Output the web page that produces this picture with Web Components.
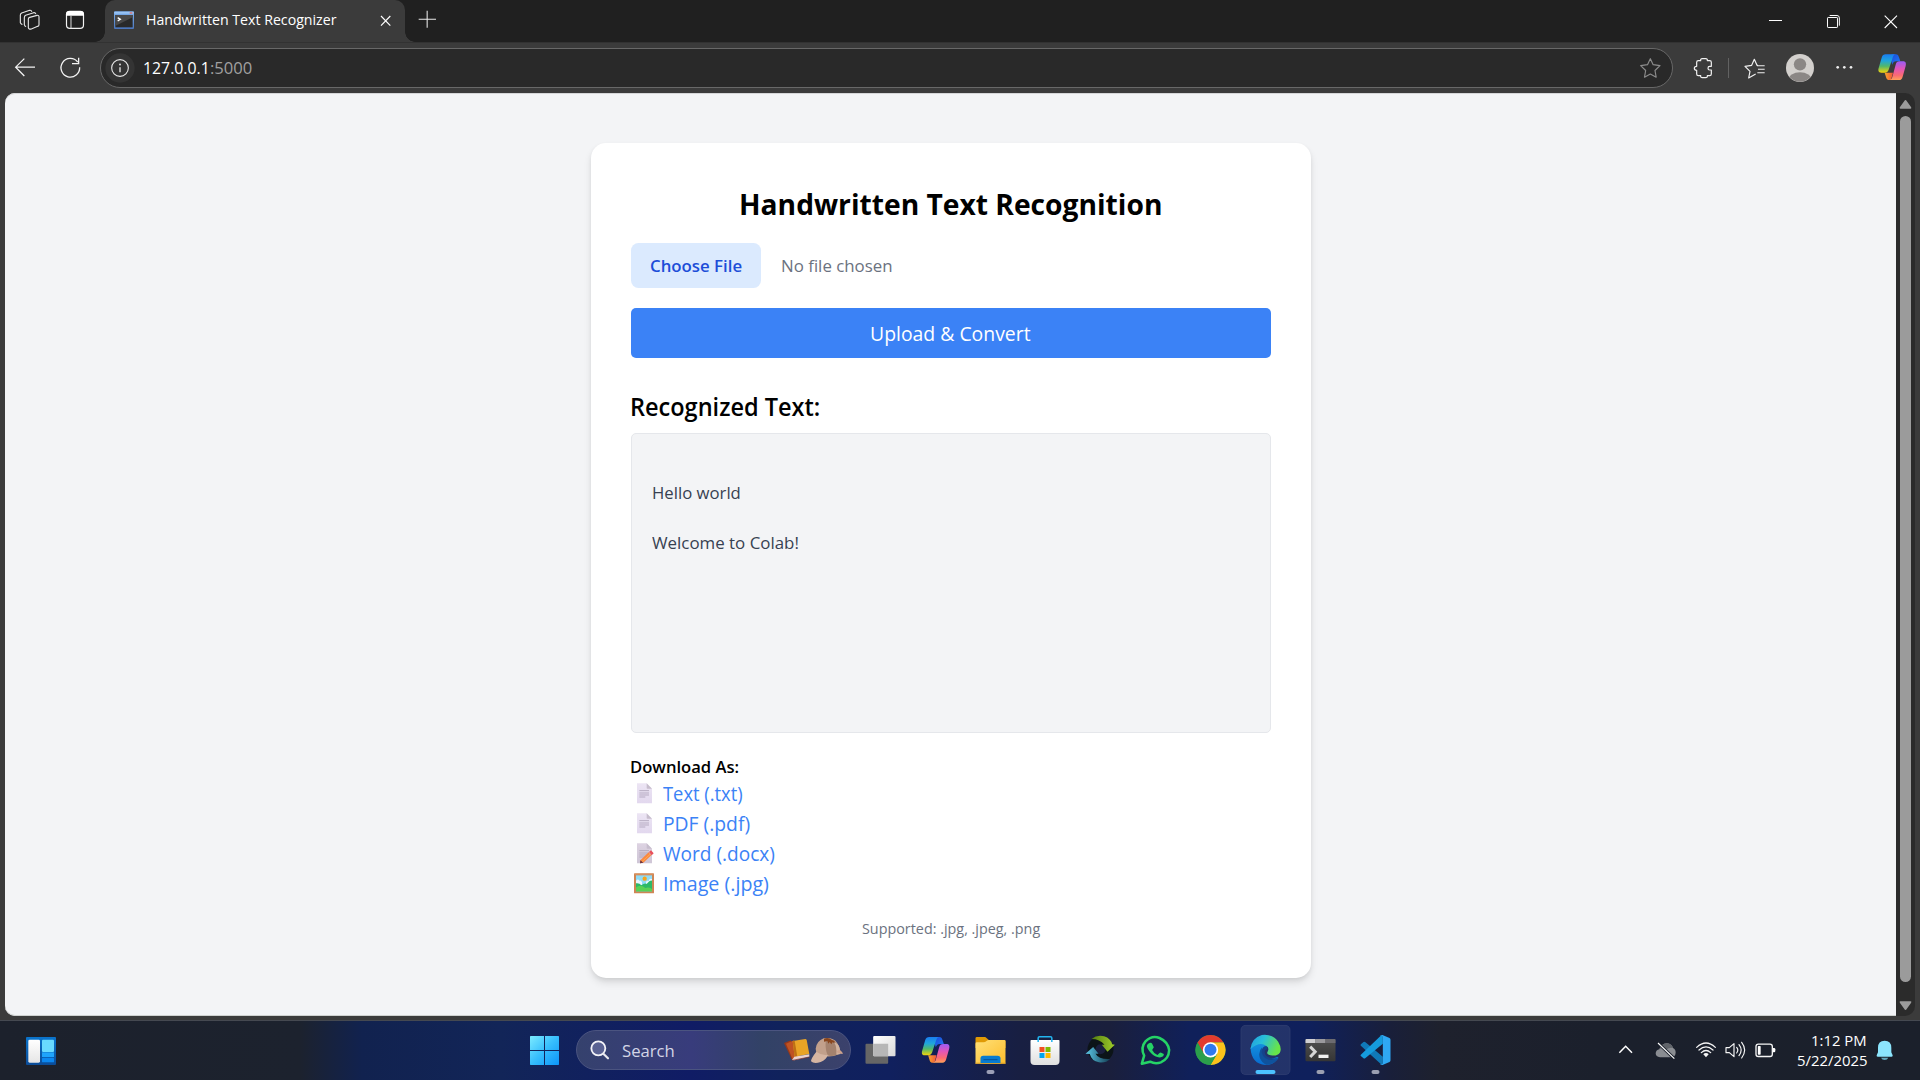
<!DOCTYPE html>
<html lang="en">
<head>
<meta charset="utf-8">
<title>Handwritten Text Recognizer</title>
<style>
html,body{margin:0;height:100%;overflow:hidden;background:#3b3b3b}
body{font-family:"Open Sans","Noto Sans",sans-serif}
</style>
</head>
<body>
<desktop-screen></desktop-screen>
<script>
/* Icon table: [viewBox x, y, width, height, markup]; three units make one pixel. */
const COPILOT = `
<linearGradient id="ca" x1="0" y1="0" x2="0" y2="1"><stop offset="0" stop-color="#1a7df0"/><stop offset=".35" stop-color="#1fa5dc"/><stop offset=".65" stop-color="#52b86a"/><stop offset="1" stop-color="#f5d40a"/></linearGradient>
<linearGradient id="cb" x1="0" y1="0" x2="0" y2="1"><stop offset="0" stop-color="#9a5cf5"/><stop offset=".4" stop-color="#e155b8"/><stop offset=".75" stop-color="#fb6a72"/><stop offset="1" stop-color="#ffa25a"/></linearGradient>
<linearGradient id="cc" x1="0" y1="0" x2="1" y2="1"><stop offset="0" stop-color="#1b49d8"/><stop offset="1" stop-color="#1f7bf5"/></linearGradient>
<linearGradient id="cd" x1="0" y1="0" x2="1" y2="0"><stop offset="0" stop-color="#f9a62b"/><stop offset="1" stop-color="#f0553c"/></linearGradient>
<path d="M40 0h12c7 0 9 5 11 12l3 9H54c-8 0-10 4-12 10L36 12Z" fill="url(#cc)"/>
<path d="M19 55h25L38 77h-5c-8 0-9-5-11-12Z" fill="url(#cd)"/>
<path d="M22 0h32c-8 0-10 6-12 13L31 46c-2 6-6 9-12 9H9C0 55-1 48 1 41L10 10C12 3 16 0 22 0Z" fill="url(#ca)"/>
<path d="M62 77H32c8 0 9-6 11-13l9-33c2-7 5-10 12-10h10c9 0 10 7 8 14L73 67c-2 7-5 10-11 10Z" fill="url(#cb)"/>`;
const DOC = `<linearGradient id="dg" x1="0" y1="0" x2="0" y2="1"><stop offset="0" stop-color="#ece5f4"/><stop offset="1" stop-color="#e2d8ee"/></linearGradient>
<path d="M81 192h29l16 16v44H81Z" fill="url(#dg)"/><path d="M110 192l16 16h-14q-2 0-2-2Z" fill="#c7bdcd"/>
<path d="M88 214h29M88 221h29M88 227h29M88 233h18" stroke="#a99eb5" stroke-width="2.4"/>`;
const ICONS = {
  workspaces:[55,25,70,70,`<g fill="none" stroke="#e6e6e6" stroke-width="3.4" stroke-linejoin="round" stroke-linecap="round"><path d="M86 58q0-4 4-5l22-6q6-1 6 5v23q0 4-4 5l-19 8q-8 2-9-4Z"/><path d="M78 80q-3 0-4-5V54q0-5 4-7l24-8q5-1 6 3"/><path d="M67 74q-4-1-5-5V47q0-5 4-7l24-8q5-1 6 3"/></g>`],
  tabs:[192,25,68,70,`<rect x="199.500" y="35" width="51" height="51" rx="10" fill="none" stroke="#f2f2f2" stroke-width="3.6"/><path d="M198 48V44q0-10 10-10h34q10 0 10 10v4Z" fill="#fff"/><path d="M213 48v38" stroke="#ddd" stroke-width="3"/>`],
  favicon:[339,30,66,60,`<linearGradient id="fb" x1="0" y1="0" x2="0" y2="1"><stop offset="0" stop-color="#7fb2ee"/><stop offset="1" stop-color="#4b75bb"/></linearGradient><rect x="342" y="34" width="60" height="53" rx="3" fill="url(#fb)"/><path d="M343 36h58v5h-58z" fill="#98c3f4"/><path d="M389 37h8v4h-8z" fill="#df6d68"/><path d="M346 45h52v37h-52z" fill="#292929"/><path d="M346 45h52v7l-52 26z" fill="#484848"/><path d="M353 53l8 5-8 5" fill="none" stroke="#fff" stroke-width="4"/>`],
  closeTab:[1137,41,40,40,`<path d="M1143 47l28 29M1171 47l-28 29" stroke="#fff" stroke-width="3.5"/>`],
  plus:[1250,28,62,60,`<path d="M1280.500 33v51M1255 59h52" stroke="#e8e8e8" stroke-width="3.2"/>`],
  back:[42,172,66,62,`<path d="M105 202.500H47M73 177L47 202.500 73 229" fill="none" stroke="#f4f4f4" stroke-width="3.8"/>`],
  reload:[176,169,68,68,`<path d="M232 187A28 28 0 1 0 238 203M235 174v18h-20" fill="none" stroke="#f4f4f4" stroke-width="3.8"/>`],
  info:[315,159,90,90,`<circle cx="360" cy="204" r="44" fill="#343434"/><circle cx="360" cy="204" r="25" fill="none" stroke="#e8e8e8" stroke-width="3.3"/><path d="M360 202v15" stroke="#e8e8e8" stroke-width="4"/><circle cx="360" cy="193.500" r="2.700" fill="#eee"/>`],
  star:[176,170,68,68,`<path d="M210 178l8.500 18 20.500 3-15 14.500 3.500 20L210 224l-17.500 9.500 3.500-20L181 199l20.500-3Z" fill="none" stroke="#8c8c8c" stroke-width="3.5" stroke-linejoin="round"/>`],
  puzzle:[340,168,66,70,`<path d="M359 182h7q-1-6 5-6h10q6 0 5 6h7q5 0 5 5v12h-5q-5 0-5 5.500t5 5.500h5v12q0 5-5 5h-7q1 6-5 6h-10q-6 0-5-6h-7q-5 0-5-5v-11q-7 0-7-6t7-6v-12q0-5 5-5Z" fill="none" stroke="#f0f0f0" stroke-width="3.6" stroke-linejoin="round"/>`],
  favs:[490,168,70,70,`<path d="M535 196h-3L524 178l-8 18-20 3 15 15-4 20 17-10 4-2" fill="none" stroke="#f0f0f0" stroke-width="3.5" stroke-linejoin="round"/><path d="M532 197.500h23M535 208h20M533 218.500h22" stroke="#f0f0f0" stroke-width="3.2"/>`],
  avatar:[615,159,90,90,`<clipPath id="av"><circle cx="660" cy="204" r="41"/></clipPath><circle cx="660" cy="204" r="42" fill="#d3d0cd"/><g clip-path="url(#av)" fill="#8b8785"><circle cx="660" cy="193" r="18.500"/><ellipse cx="660" cy="240" rx="35" ry="23"/></g>`],
  dots:[766,190,58,26,`<g fill="#eee"><circle cx="774" cy="203" r="4"/><circle cx="794" cy="203" r="4"/><circle cx="814" cy="203" r="4"/></g>`],
  copilot:[-1,-1,86,80,COPILOT],
  min:[564,45,46,36,`<path d="M567 61.500h39" stroke="#fff" stroke-width="3"/>`],
  max:[738,42,46,46,`<path d="M749 46.500h22q7 0 7 7V77" fill="none" stroke="#fff" stroke-width="3"/><rect x="742.500" y="52.500" width="30" height="30" rx="2" fill="none" stroke="#fff" stroke-width="3"/>`],
  close:[910,41,48,48,`<path d="M915 46l37 37M952 46l-37 37" stroke="#fff" stroke-width="3.2"/>`],
  up:[957,297,40,32,`<path d="M976.500 300q2 0 3 2l14 20q2 4-2 4h-30q-4 0-2-4l14-20q1-2 3-2Z" fill="#9b9b9b"/>`],
  down:[957,2,40,32,`<path d="M976.500 32q2 0 3-2l14-20q2-4-2-4h-30q-4 0-2 4l14 20q1 2 3 2Z" fill="#9b9b9b"/>`],
  doc:[72,188,60,68,DOC],
  memo:[72,188,60,68,DOC.replaceAll('dg','dm').replace('#ece5f4','#ddd3e2').replace('#e2d8ee','#cfc6d6')+`<path d="M91 243l25-24 8 9-24 22-10 2Z" fill="#fb8740"/><path d="M96 247l24-22" stroke="#ffac50" stroke-width="3"/><path d="M117 218l6-5 8 9-6 6Z" fill="#e8505b"/><path d="M91 243l9 7-10 2Z" fill="#6b3540"/>`],
  picture:[72,458,60,68,`<rect x="72" y="462" width="60" height="60" rx="2" fill="#cf8654"/><path d="M74 464h56" stroke="#e4a172" stroke-width="2"/><path d="M78 468h48v48H78z" fill="#8fdcf6"/><circle cx="104" cy="478" r="6.500" fill="#f5a41c"/><path d="M78 484q6-7 10 0 6-2 8 5v9H78ZM108 488q4-6 8-3 2-9 10-6v14h-18Z" fill="#eaf6ff"/><path d="M78 492q10-2 16 6 10-8 16-4 10-12 16-10v32H78Z" fill="#2cb968"/><path d="M78 504q14-10 28 2 10-4 20 3v7H78Z" fill="#59d154"/>`],
  widgets:[75,135,96,90,`<linearGradient id="wg" x1="0" y1="0" x2="0" y2="1"><stop offset="0" stop-color="#0a74cc"/><stop offset="1" stop-color="#0b4c98"/></linearGradient><rect x="78" y="138" width="90" height="84" rx="3" fill="url(#wg)"/><linearGradient id="wh" x1="0" y1="0" x2="0" y2="1"><stop offset="0" stop-color="#fff"/><stop offset="1" stop-color="#e6e6e6"/></linearGradient><rect x="85" y="146" width="35" height="69" rx="4" fill="url(#wh)"/><rect x="126" y="146" width="36" height="37" rx="3" fill="#69dafe"/><rect x="126" y="184" width="36" height="14" fill="#1fa4fb"/><rect x="126" y="200" width="36" height="14" rx="2" fill="#0b87ef"/>`],
  start:[84,30,99,180,`<linearGradient id="sg" gradientUnits="userSpaceOnUse" x1="90" y1="78" x2="177" y2="165"><stop offset="0" stop-color="#7cebff"/><stop offset=".5" stop-color="#36bdfd"/><stop offset="1" stop-color="#0c94f8"/></linearGradient><path fill="url(#sg)" d="M90 80q0-2 2-2h40v42H90zM135 78h40q2 0 2 2v40h-42zM90 123h42v42H92q-2 0-2-2zM135 123h42v40q0 2-2 2h-40z"/>`],
  search:[268,88,64,64,`<circle cx="296" cy="116" r="21" fill="#7e83b5" fill-opacity=".5" stroke="#f3f3f8" stroke-width="5.500"/><path d="M311 132l14 14" stroke="#e8e8ef" stroke-width="6.500" stroke-linecap="round"/>`],
  sherlock:[852,78,183,84,`<path d="M855 99l21-8 10 46-7 13Z" fill="#97381a"/><path d="M861 101l24-10 16 49-20 8Z" fill="#be5223"/><path d="M881 93l38-6q3 0 4 3l8 42-44 8Z" fill="#e9a426"/><path d="M881 93l6 0 8 47-8 1Z" fill="#bd7015"/><path d="M879 150l7-10 45-7v7l-45 11Z" fill="#ead3cf"/><path d="M880 151l51-10" stroke="#803028" stroke-width="2"/>
<path d="M950 116q3-23 24-31 28-4 40 13 9 12 7 33-34 18-69-3Z" fill="#c2a08b"/><path d="M981 90q-4 23 4 44 12 9 36-2V124q-4-31-27-36Z" fill="#a4826e"/><path d="M1005 97q9 13 7 37l13-2-3-19q-4-12-17-16Z" fill="#d0b29e"/><path d="M1012 127q7-13 15-3 8 8 2 8Z" fill="#cda28c"/><path d="M952 125q-16 20-16 29 9 9 29 2 17-7 22-22-17 4-35-9Z" fill="#d5b5a2"/><path d="M975 86q14-5 24 4l8 3-1 7-5-4-4 7-5-7-4 5-3-8-10 2Z" fill="#89461e"/>`],
  taskview:[40.5,30,165,180,`<linearGradient id="tv" x1="0" y1="0" x2="1" y2="1"><stop offset="0" stop-color="#fff"/><stop offset="1" stop-color="#d9d9d9"/></linearGradient><rect x="78" y="101" width="68" height="60" rx="3" fill="#666"/><rect x="101" y="78" width="67" height="61" rx="3" fill="url(#tv)"/><path d="M101 101h45v38h-42q-3 0-3-3Z" fill="#b7b7b7"/>`],
  copilotBar:[205.5,30,165,180,`<g transform="translate(247 81)">${COPILOT}</g>`],
  explorer:[370.5,30,165,180,`<linearGradient id="eg" x1="0" y1="0" x2="1" y2="1"><stop offset="0" stop-color="#ffe078"/><stop offset="1" stop-color="#fdbd2b"/></linearGradient><path d="M408 85q0-4 4-4h24q3 0 5 3l7 6h46q4 0 4 4v20h-90Z" fill="#e09a05"/><path d="M408 101q0-4 4-4h20q5 0 9-4 3-3 7-3h46q4 0 4 4v67h-90Z" fill="url(#eg)"/><path d="M408 158h90v3h-90z" fill="#dca027"/><path d="M423 159v-14q0-8 8-8h43q9 0 9 8v14Z" fill="#087bd0"/><path d="M432 149h42" stroke="#04529b" stroke-width="3"/><rect x="441" y="180" width="24" height="12" rx="6" fill="#9b9fb7"/>`],
  store:[535.5,30,165,180,`<linearGradient id="st" x1="0" y1="0" x2="0" y2="1"><stop offset="0" stop-color="#fff"/><stop offset="1" stop-color="#dfdfdf"/></linearGradient><path d="M573 92q0-2 2-2h83q2 0 2 2v61q0 12-12 12h-63q-12 0-12-12Z" fill="url(#st)"/><path d="M596 96V84q0-4 4-4h33q4 0 4 4v12" fill="none" stroke="#22b5f0" stroke-width="4.500"/><path d="M600 111h15v15h-15z" fill="#f25022"/><path d="M618 111h15v15h-15z" fill="#7fba00"/><path d="M600 129h15v15h-15z" fill="#00a4ef"/><path d="M618 129h15v15h-15z" fill="#ffb900"/>`],
  sync:[700.5,30,165,180,`<linearGradient id="sy" x1="0" y1="0" x2="1" y2="0"><stop offset="0" stop-color="#537d12"/><stop offset="1" stop-color="#a0cd2a"/></linearGradient><linearGradient id="sz" x1="0" y1="0" x2="1" y2="0"><stop offset="0" stop-color="#5cc9e9"/><stop offset="1" stop-color="#123b50"/></linearGradient><circle cx="783" cy="118" r="27" fill="none" stroke="#0c1418" stroke-width="24"/><path d="M756 87q16-13 38-8 20 7 24 24l8 1-22 21-17-21h8q-14-17-39-17Z" fill="url(#sy)"/><path d="M812 147q-13 13-34 10-22-4-27-25l-13-1 23-20 16 20h-9q10 18 44 16Z" fill="url(#sz)"/>`],
  whatsapp:[25.5,30,165,180,`<path d="M67 161l7-24q-12-24 4-43 19-19 42-10 25 11 29 36-1 27-25 37-17 6-32-2Z" fill="none" stroke="#25d366" stroke-width="7.500" stroke-linejoin="round"/><path d="M90 99q5-3 8 2l5 11-5 8q6 12 16 15l6-6q2-2 5-1l8 4q0 8-9 10-16 2-29-12-14-16-13-23 2-6 8-8Z" fill="#25d366"/>`],
  chrome:[190.5,30,165,180,`<circle cx="273" cy="120" r="45" fill="#2b9f4b"/><path d="M234 97.500A45 45 0 0 1 312 97.500H273L253 131Z" fill="#e33b2e"/><path d="M273 97.500h39A45 45 0 0 1 273 165l20-34Z" fill="#fcc21b"/><path d="M234 97.500L253 131a23 23 0 0 0 40 0L273 165A45 45 0 0 1 234 97.500Z" fill="#2b9f4b"/><circle cx="273" cy="119.500" r="23" fill="#fff"/><circle cx="273" cy="119.500" r="18" fill="#3079ee"/>`],
  edge:[355.5,30,165,180,`<rect x="364" y="46" width="148" height="148" rx="14" fill="#fff" fill-opacity=".085" stroke="#fff" stroke-opacity=".1" stroke-width="2"/><linearGradient id="e1" x1="0" y1="0" x2="1" y2=".35"><stop offset="0" stop-color="#219bdf"/><stop offset=".45" stop-color="#28bfda"/><stop offset="1" stop-color="#68e449"/></linearGradient><linearGradient id="e2" x1="0" y1="0" x2="0" y2="1"><stop offset="0" stop-color="#1594df"/><stop offset="1" stop-color="#086bce"/></linearGradient><path d="M393 114q14-25 41-18 14 7 3 18-14 15 0 26 18 10 36 1l4 2q-14 22-39 22-42-3-45-51Z" fill="url(#e2)"/><path d="M393 117q3-33 34-42 32-4 49 20 12 20 5 33-9 13-33 6-8-3-3-10 5-11-5-17-20-13-47 10Z" fill="url(#e1)"/><path d="M428 112q-13 13-7 32 6 14 19 20 23 1 37-20-14 8-30 3-24-9-19-35Z" fill="#0f529c"/><path d="M437 108q-13 7-10 21 4 15 20 20 16 4 29-5-12 3-25-1-20-7-14-22 7-3 7-7-1-5-7-6Z" fill="#15438c"/><rect x="408" y="180" width="60" height="12" rx="6" fill="#4cc2ff"/>`],
  terminal:[520.5,30,165,180,`<linearGradient id="tm" x1="0" y1="0" x2="0" y2="1"><stop offset="0" stop-color="#505050"/><stop offset="1" stop-color="#353535"/></linearGradient><path d="M558 90q0-3 3-3h84q3 0 3 3v60q0 4-4 4h-82q-4 0-4-4Z" fill="url(#tm)"/><path d="M558 90q0-3 3-3h27v12h-30z" fill="#d0cfd2"/><path d="M588 87h30v12h-30z" fill="#9a999d"/><path d="M618 87h27q3 0 3 3v9h-30z" fill="#6c6b70"/><path d="M572 110l15 15-15 16" fill="none" stroke="#d6d6d6" stroke-width="9"/><path d="M597 139h30" stroke="#f1f1f1" stroke-width="10"/><rect x="591" y="180" width="24" height="12" rx="6" fill="#9b9fb1"/>`],
  vscode:[685.5,30,165,180,`<path d="M724 103l8-7q3-2 6 1l52 43v23q-4 1-7-2l-59-54q-2-2 0-4Z" fill="#1079b8"/><path d="M724 138l8 7q3 2 6-1l52-43V76q-4-1-7 2l-59 56q-2 2 0 4Z" fill="#159bdd"/><path d="M789 75l21 9q3 2 3 5v62q0 3-3 5l-21 9q-6 1-7-4 8 5 8-3V82q0-8-8-4 1-4 7-3Z" fill="#2fa8f3"/><rect x="756" y="180" width="24" height="12" rx="6" fill="#9b9fb1"/>`],
  chevron:[112,130,52,40,`<path d="M119 159l19-19 19 19" fill="none" stroke="#fff" stroke-width="4.500"/>`],
  cloud:[223,122,70,58,`<path d="M241 171q-13-2-13-12 1-11 11-12 6-17 22-18 14 0 19 14 8 3 8 14-1 13-13 14Z" fill="#8a8d92"/><path d="M239 146q8-17 23-17 14 1 18 14-15-3-21 7-9-10-20-4Z" fill="#60646a"/><path d="M235 128l49 47" stroke="#1b202c" stroke-width="9"/><path d="M235 128l49 47" stroke="#fff" stroke-width="3.500"/>`],
  wifi:[345,122,66,54,`<g fill="none" stroke="#f5f5f5" stroke-width="3.700" stroke-linecap="round"><path d="M350 141q28-26 56 0M357 149q21-19 42 0M364 157q14-13 28 0"/></g><path d="M378 158q5 0 8 4l-8 9-8-9q3-4 8-4Z" fill="#f5f5f5"/>`],
  volume:[434,120,68,62,`<g fill="none" stroke="#f5f5f5" stroke-width="3.500" stroke-linejoin="round" stroke-linecap="round"><path d="M440 143h10l14-12v39l-14-12h-10Z"/><path d="M472 142q7 8 0 17M479 134q13 16 0 33M487 127q18 23 0 47"/></g>`],
  battery:[524,126,68,50,`<rect x="530" y="132.500" width="49" height="37" rx="7" fill="none" stroke="#f5f5f5" stroke-width="4"/><path d="M581 144h3q4 0 4 4v5q0 4-4 4h-3Z" fill="#fff"/><rect x="535.500" y="138" width="8.500" height="26" rx="2" fill="#fff"/>`],
  bell:[886,118,56,66,`<path d="M915 123q20 0 20 21v14l4 9q1 4-3 4h-42q-4 0-3-4l4-9v-14q0-21 20-21Z" fill="#8ce5fd"/><path d="M904 174h22q-3 7-11 7t-11-7Z" fill="#63a6bb"/>`]
};

class UiIcon extends HTMLElement{
  connectedCallback(){
    const [x,y,w,h,m]=ICONS[this.getAttribute('name')];
    this.attachShadow({mode:'open'}).innerHTML=
    `<style>:host{display:block;flex:none}svg{display:block}</style><svg width="${w/3}" height="${h/3}" viewBox="${x} ${y} ${w} ${h}">${m}</svg>`;
  }
}
customElements.define('ui-icon',UiIcon);

/* One line of text condensed or expanded to a set advance width. */
class FitText extends HTMLElement{
  connectedCallback(){
    const w=+this.getAttribute('w');
    this.attachShadow({mode:'open'}).innerHTML=
    `<style>:host{display:block;flex:none;width:${w}px;white-space:nowrap}span{display:inline-block;transform-origin:0 50%}</style><span><slot></slot></span>`;
    const s=this.shadowRoot.querySelector('span');
    s.style.transform=`scaleX(${w/s.offsetWidth})`;
  }
}
customElements.define('fit-text',FitText);

const define=(tag,html)=>customElements.define(tag,class extends HTMLElement{
  connectedCallback(){
    const t=document.createElement('template');t.innerHTML=html;
    this.attachShadow({mode:'open'}).append(t.content.cloneNode(true));
  }
});

define('tab-strip',`<style>
:host{display:flex;height:42px;background:#202020;color:#fff}
.left{width:105px;display:flex;box-sizing:border-box;padding:8.333px 0 0 18.333px;gap:22.333px}
.tab{position:relative;width:300px;box-sizing:border-box;background:#3b3b3b;border-radius:10px 10px 0 0;display:flex;padding:10px 0 0 8px}
.tab:before,.tab:after{content:"";position:absolute;bottom:0;width:10px;height:10px}
.tab:before{left:-10px;background:radial-gradient(circle at 0 0,transparent 9.5px,#3b3b3b 10px)}
.tab:after{right:-10px;background:radial-gradient(circle at 100% 0,transparent 9.5px,#3b3b3b 10px)}
.t{font-size:14.6px;line-height:20px;margin:-1px 1px 0 10.5px}
.x{margin:3.667px 0 0 42px}
.plus{margin:9.333px 0 0 11.667px}
.win{margin-left:auto;display:flex;align-items:flex-start;padding:14px 20.667px 0 0}
</style><div class="left"><ui-icon name="workspaces"></ui-icon><ui-icon name="tabs"></ui-icon></div>
<div class="tab"><ui-icon name="favicon"></ui-icon><fit-text class="t" w="190">Handwritten Text Recognizer</fit-text><ui-icon class="x" name="closeTab"></ui-icon></div>
<ui-icon class="plus" name="plus"></ui-icon>
<div class="win"><ui-icon name="min" style="margin:1px 42.667px 0 0"></ui-icon><ui-icon name="max" style="margin-right:42px"></ui-icon><ui-icon name="close" style="margin-top:-.333px"></ui-icon></div>`);

define('address-bar',`<style>
:host{display:flex;align-items:center;height:51px;box-sizing:border-box;padding:0 6px 0 14px;background:#3b3b3b;box-shadow:inset 0 1px #323232}
.pill{display:flex;align-items:center;box-sizing:border-box;width:1573px;height:40px;margin-left:18.667px;border:1px solid #686868;border-radius:20px;background:#292929;padding:0 10px 0 4px;color:#fff;font-size:17px;line-height:24px}
.port{color:#a0a0a0}.pill ui-icon:last-child{margin-left:auto}
.sep{width:1px;height:20px;background:#626262}
</style><ui-icon name="back"></ui-icon><ui-icon name="reload" style="margin-left:22.667px"></ui-icon>
<div class="pill"><ui-icon name="info"></ui-icon><fit-text w="67" style="margin-left:8px">127.0.0.1</fit-text><fit-text class="port" w="42">:5000</fit-text><ui-icon name="star"></ui-icon></div>
<ui-icon name="puzzle" style="margin-left:19.333px"></ui-icon><i class="sep" style="margin-left:14px"></i>
<ui-icon name="favs" style="margin-left:13.667px"></ui-icon><ui-icon name="avatar" style="margin-left:18.333px"></ui-icon>
<ui-icon name="dots" style="margin-left:20.333px"></ui-icon><ui-icon name="copilot" style="margin-left:24px"></ui-icon>`);

define('page-scrollbar',`<style>
:host{display:flex;flex-direction:column;align-items:center;width:19px;box-sizing:border-box;background:#2b2b2b;border-radius:0 10px 10px 0;padding:6px 0 5.300px}
.thumb{flex:1;width:11px;border-radius:6px;background:#9b9b9b;margin:6px 0 17.700px}
</style><ui-icon name="up"></ui-icon><div class="thumb"></div><ui-icon name="down"></ui-icon>`);

/* Download row: an icon name in the "icon" attribute, the label in the slot. */
customElements.define('download-link',class extends HTMLElement{
  connectedCallback(){
    this.attachShadow({mode:'open'}).innerHTML=`<style>:host{display:flex;align-items:center;gap:9.500px;height:30px;padding-left:3px;color:#3b82f6;font-size:19.400px;line-height:30px}
    slot{display:block;margin-top:2px}</style><ui-icon name="${this.getAttribute('icon')}"></ui-icon><slot></slot>`;
  }
});

define('recognizer-card',`<style>
:host{display:block;box-sizing:border-box;width:720px;height:835px;padding:40px;background:#fff;border-radius:15px;box-shadow:0 5px 8px -1px rgba(0,0,0,.12),0 2px 5px -1px rgba(0,0,0,.08);color:#000}
h1,h2,p{margin:0}
h1{display:flex;justify-content:center;font-size:29.4px;line-height:42px;height:40px;font-weight:700}
.file{display:flex;margin:20px 0;height:45px;line-height:46.500px;font-size:17px;color:#6b7280}
.choose{box-sizing:border-box;width:130px;padding-left:19px;border-radius:7.5px;background:#dbeafe;color:#1d4ed8;font-weight:600;margin-right:20px}
.go{display:flex;justify-content:center;height:50px;line-height:51px;background:#3b82f6;border-radius:5px;color:#fff;font-size:19.4px}
h2{margin:30px 0 10px;font-size:24.400px;line-height:37px;height:35px;font-weight:600}
.out{box-sizing:border-box;height:300px;border:1px solid #e5e7eb;border-radius:5px;background:#f3f4f6;padding:46px 20px 0;font-size:17px;line-height:25px;color:#374151;margin-bottom:20px}
.out fit-text+fit-text{margin-top:25px}
h3{margin:0;font-size:17px;line-height:27px;height:25px;font-weight:600}
.sup{display:flex;justify-content:center;margin-top:20px;line-height:20px;font-size:14.600px;color:#6b7280}
</style>
<h1><fit-text w="423">Handwritten Text Recognition</fit-text></h1>
<div class="file"><div class="choose"><fit-text w="92">Choose File</fit-text></div><fit-text w="112">No file chosen</fit-text></div>
<div class="go"><fit-text w="161">Upload &amp; Convert</fit-text></div>
<h2><fit-text w="190" style="margin-left:-.500px">Recognized Text:</fit-text></h2>
<div class="out"><fit-text w="88.500">Hello world</fit-text><fit-text w="147">Welcome to Colab!</fit-text></div>
<h3><fit-text w="109.500" style="margin-left:-.500px">Download As:</fit-text></h3>
<download-link icon="doc"><fit-text w="79.500">Text (.txt)</fit-text></download-link>
<download-link icon="doc"><fit-text w="87.500">PDF (.pdf)</fit-text></download-link>
<download-link icon="memo"><fit-text w="112">Word (.docx)</fit-text></download-link>
<download-link icon="picture"><fit-text w="105.500">Image (.jpg)</fit-text></download-link>
<p class="sup"><fit-text w="178">Supported: .jpg, .jpeg, .png</fit-text></p>`);

define('task-bar',`<style>
:host{display:flex;height:60px;box-sizing:border-box;border-top:1px solid #454951;color:#fff;background:linear-gradient(90deg,#1c212c 0,#1c222e 300px,#11224f 362px,#122558 500px,#101c65 690px,#10225c 780px,#10205e 890px,#181f42 1020px,#1a1f3c 1110px,#10205a 1190px,#0f205c 1310px,#191f3a 1390px,#1e212d 1440px,#1b202c 1600px,#1b202b)}
ui-icon{margin-top:-1px}
.w{margin:15px 0 0 25px}
.s{margin-left:471px}
.pill{display:flex;box-sizing:border-box;width:275px;height:40px;border-radius:20px;margin:9px 2px 0 15px;background:linear-gradient(90deg,#35416d,#383c7c 42%,#324266 68%,#3b416c);border:1px solid #4b5480;padding-left:12.333px;font-size:17px;line-height:39px;color:#d3d5e6}
.pill fit-text{margin-left:11px}
.tray{margin-left:auto;display:flex;padding-right:26px}
.clock{display:flex;flex-direction:column;align-items:flex-end;width:72px;font-size:14.600px;line-height:20px;margin:8.500px 0 0 18.300px}
</style>
<ui-icon class="w" name="widgets"></ui-icon><ui-icon class="s" name="start"></ui-icon>
<div class="pill"><ui-icon name="search" style="margin-top:8.333px"></ui-icon><fit-text w="53">Search</fit-text><ui-icon name="sherlock" style="margin:5px 0 0 108.500px"></ui-icon></div>
<ui-icon name="taskview"></ui-icon><ui-icon name="copilotBar"></ui-icon><ui-icon name="explorer"></ui-icon><ui-icon name="store"></ui-icon><ui-icon name="sync"></ui-icon><ui-icon name="whatsapp"></ui-icon><ui-icon name="chrome"></ui-icon><ui-icon name="edge"></ui-icon><ui-icon name="terminal"></ui-icon><ui-icon name="vscode"></ui-icon>
<div class="tray"><ui-icon name="chevron" style="margin-top:22.333px"></ui-icon><ui-icon name="cloud" style="margin:19.667px 0 0 19.667px"></ui-icon><ui-icon name="wifi" style="margin:19.667px 0 0 17.333px"></ui-icon><ui-icon name="volume" style="margin:19px 0 0 7.667px"></ui-icon><ui-icon name="battery" style="margin:21px 0 0 7.333px"></ui-icon>
<div class="clock"><fit-text w="56">1:12 PM</fit-text><fit-text w="70.500">5/22/2025</fit-text></div><ui-icon name="bell" style="margin:18.333px 0 0 8px"></ui-icon></div>`);

define('desktop-screen',`<style>
:host{display:flex;flex-direction:column;width:1920px;height:1080px;background:#3b3b3b}
.view{display:flex;height:923px;margin:0 5px 4px}
.page{flex:1;display:flex;justify-content:center;align-items:flex-start;box-sizing:border-box;padding:50px 0 0;background:#f3f4f6;border-radius:10px 0 0 10px;box-shadow:inset 0 1px #d5d6d8,inset 0 -1px #cfd2d0}
</style><tab-strip></tab-strip><address-bar></address-bar><div class="view"><div class="page"><recognizer-card></recognizer-card></div><page-scrollbar></page-scrollbar></div><task-bar></task-bar>`);
</script>
</body>
</html>
